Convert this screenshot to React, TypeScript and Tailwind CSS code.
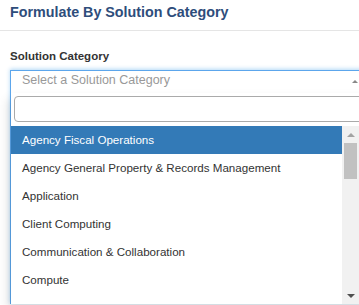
import React from "react";

const options = [
  "Agency Fiscal Operations",
  "Agency General Property & Records Management",
  "Application",
  "Client Computing",
  "Communication & Collaboration",
  "Compute",
  "Corporate Communications",
];

export default function App() {
  return (
    <div className="w-[359px] h-[305px] overflow-hidden bg-white font-['Liberation_Sans',Arial,sans-serif]">
      <div className="h-[31px] border-b border-[#e5e5e5] px-[10px] pt-[2px]">
        <div className="text-[14.3px] font-bold leading-[20px] text-[#2e4d7b]">
          Formulate By Solution Category
        </div>
      </div>
      <div className="pl-[10px]">
        <div className="mt-[17px] text-[11.5px] font-bold leading-[16px] text-[#333]">
          Solution Category
        </div>
        <div className="mt-[6px] w-[360px] border-l border-t border-[#5ca6ec] shadow-[0_-1px_4px_rgba(82,168,236,0.45)]">
          <div className="flex h-[22px] items-start pl-[11px] pr-[12px]">
            <span className="flex-1 text-[12.5px] leading-[18px] text-[#999]">
              Select a Solution Category
            </span>
            <span className="mt-[9px] h-0 w-0 border-x-[3px] border-b-[3px] border-x-transparent border-b-[#888]" />
          </div>
          <div className="bg-white shadow-[-3px_6px_10px_rgba(0,0,0,0.12)]">
            <div className="pl-[3px] pr-[4px] pb-[4px] pt-[3px]">
              <div className="h-[26px] rounded-[4px] border border-[#aaa] bg-white" />
            </div>
            <div className="flex h-[178px] w-[348px]">
              <div className="flex-1 overflow-hidden">
                {options.map((o, i) => (
                  <div
                    key={o}
                    className={
                      i === 0
                        ? "flex h-[28px] items-center whitespace-nowrap bg-[#337ab7] pl-[11px] text-[11.6px] text-white"
                        : "flex h-[28px] items-center whitespace-nowrap pl-[11px] text-[11.6px] text-[#333]"
                    }
                  >
                    {o}
                  </div>
                ))}
              </div>
              <div className="flex w-[17px] flex-col bg-[#f1f1f1]">
                <div className="flex h-[17px] items-center justify-center">
                  <span className="h-0 w-0 border-x-[4px] border-b-[4px] border-x-transparent border-b-[#a3a3a3]" />
                </div>
                <div className="mx-[2px] h-[36px] bg-[#c1c1c1]" />
                <div className="flex-1" />
                <div className="flex h-[17px] items-center justify-center">
                  <span className="h-0 w-0 border-x-[4px] border-t-[4px] border-x-transparent border-t-[#505050]" />
                </div>
              </div>
            </div>
          </div>
        </div>
      </div>
    </div>
  );
}
